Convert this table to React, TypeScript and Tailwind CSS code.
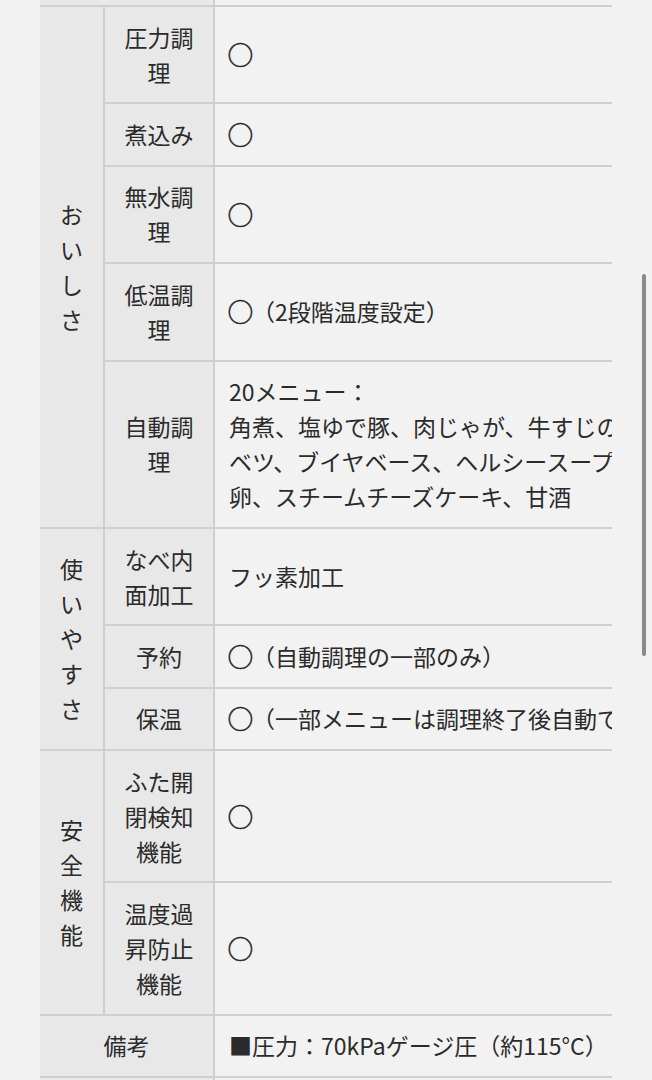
import React from "react";

const H = "bg-[#e8e8e8] border-r-2 border-b-2 border-[#cfcfcf]";
const D = "bg-[#f2f2f2] border-r-2 border-b-2 border-[#cfcfcf]";

function renderLine(l: string) {
  if (!l.startsWith("○")) return l;
  return (
    <>
      <span className="inline-block scale-[1.12] [-webkit-text-stroke:0.5px]">○</span>
      {l.slice(1)}
    </>
  );
}

function Label({ lines }: { lines: string[] }) {
  return (
    <div className={`${H} flex items-center justify-center py-[12.7px] text-center`}>
      <div>
        {lines.map((l, i) => (
          <div key={i}>{l}</div>
        ))}
      </div>
    </div>
  );
}

function Data({ lines }: { lines: string[] }) {
  return (
    <div className={`${D} flex items-center py-[12.7px] pl-[14px] whitespace-nowrap`}>
      <div>
        {lines.map((l, i) => (
          <div key={i}>{renderLine(l)}</div>
        ))}
      </div>
    </div>
  );
}

function Group({ chars, span }: { chars: string[]; span: string }) {
  return (
    <div className={`${H} ${span} flex items-center justify-center`}>
      <div className="flex flex-col items-center">
        {chars.map((c, i) => (
          <div key={i}>{c}</div>
        ))}
      </div>
    </div>
  );
}

export default function App() {
  return (
    <div
      className="relative min-h-[1080px] h-[1080px] w-full overflow-hidden bg-[#f2f2f2] text-[23px] leading-[35px] text-[#2b2b2b]"
      style={{ fontFamily: '"Noto Sans CJK JP", "Noto Sans", sans-serif' }}
    >
      <div className="ml-[40px] w-[572px] overflow-hidden">
        <div className="grid w-[860px] grid-cols-[65px_110px_1fr]">
          {/* previous row sliver */}
          <div className={`${H} col-span-2 h-[7px]`} />
          <div className={`${D} h-[7px]`} />

          <Group chars={["お", "い", "し", "さ"]} span="row-span-5" />
          <Label lines={["圧力調", "理"]} />
          <Data lines={["○"]} />
          <Label lines={["煮込み"]} />
          <Data lines={["○"]} />
          <Label lines={["無水調", "理"]} />
          <Data lines={["○"]} />
          <Label lines={["低温調", "理"]} />
          <Data lines={["○（2段階温度設定）"]} />
          <Label lines={["自動調", "理"]} />
          <Data
            lines={[
              "20メニュー：",
              "角煮、塩ゆで豚、肉じゃが、牛すじのおでん、ロールキャ",
              "ベツ、ブイヤベース、ヘルシースープ、温泉",
              "卵、スチームチーズケーキ、甘酒",
            ]}
          />

          <Group chars={["使", "い", "や", "す", "さ"]} span="row-span-3" />
          <Label lines={["なべ内", "面加工"]} />
          <Data lines={["フッ素加工"]} />
          <Label lines={["予約"]} />
          <Data lines={["○（自動調理の一部のみ）"]} />
          <Label lines={["保温"]} />
          <Data lines={["○（一部メニューは調理終了後自動で保温）"]} />

          <Group chars={["安", "全", "機", "能"]} span="row-span-2" />
          <Label lines={["ふた開", "閉検知", "機能"]} />
          <Data lines={["○"]} />
          <Label lines={["温度過", "昇防止", "機能"]} />
          <Data lines={["○"]} />

          <div className={`${H} col-span-2 flex items-center justify-center py-[12.7px]`}>備考</div>
          <Data lines={["■圧力：70kPaゲージ圧（約115°C）"]} />

          <div className={`${H} col-span-2 h-[20px]`} />
          <div className={`${D} h-[20px]`} />
        </div>
      </div>
      <div className="absolute left-[642px] top-[274px] h-[382px] w-[4px] rounded-full bg-[#8a8a8a]" />
    </div>
  );
}
